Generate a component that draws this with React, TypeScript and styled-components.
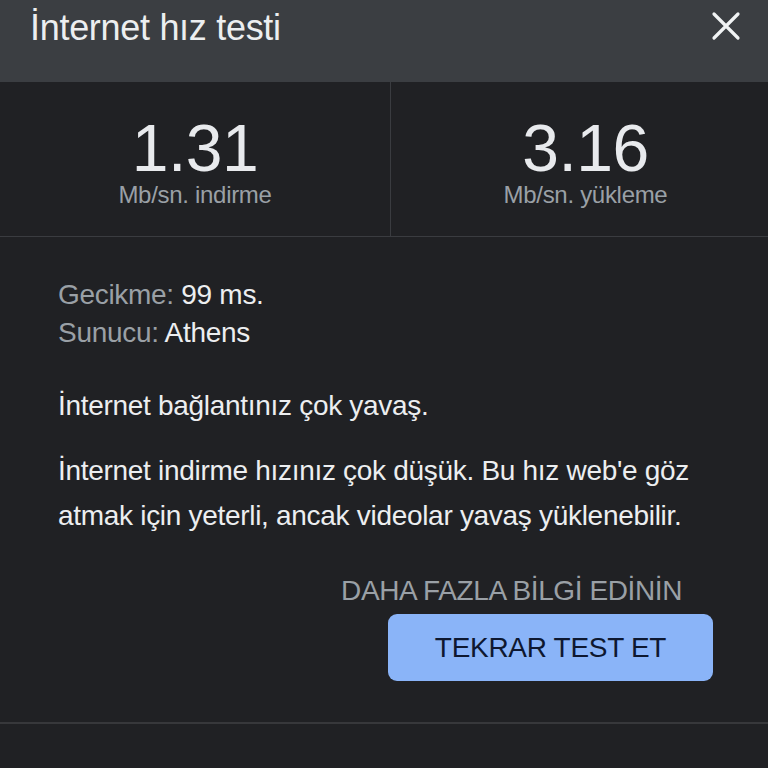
import React from "react";
import styled, { createGlobalStyle } from "styled-components";

const Global = createGlobalStyle`
  html, body { margin: 0; padding: 0; background: #202124; }
  body { font-family: "Liberation Sans", Arial, sans-serif; overflow: hidden; }
`;

const Dialog = styled.div`
  width: 768px;
  height: 768px;
  background: #202124;
  color: #e8eaed;
  overflow: hidden;
`;

const Header = styled.header`
  height: 82px;
  box-sizing: border-box;
  background: #3b3e42;
  display: flex;
  align-items: flex-start;
  justify-content: space-between;
  padding: 10px 26px 0 30px;
`;

const Title = styled.h1`
  margin: 0;
  font-size: 36px;
  line-height: 35px;
  font-weight: 400;
  color: #eceef0;
  letter-spacing: -0.3px;
`;

const Close = styled.button`
  border: 0;
  background: none;
  padding: 0;
  width: 32px;
  height: 32px;
  display: flex;
  align-items: center;
  justify-content: center;
  cursor: pointer;
`;

const Stats = styled.section`
  display: grid;
  grid-template-columns: 390px 390px;
  border-bottom: 1px solid #3a3c40;
`;

const Stat = styled.div<{ $divider?: boolean }>`
  display: flex;
  flex-direction: column;
  align-items: center;
  padding: 36px 0 29px;
  border-left: ${(p) => (p.$divider ? "1px solid #3a3c40" : "0")};
`;

const Value = styled.div`
  font-size: 66px;
  line-height: 60px;
  color: #e8eaed;
  letter-spacing: -0.5px;
`;

const Unit = styled.div`
  font-size: 24px;
  line-height: 24px;
  margin-top: 5px;
  color: #9aa0a6;
  letter-spacing: -0.3px;
`;

const Body = styled.section`
  padding: 39px 55px 41px 58px;
  display: flex;
  flex-direction: column;
  border-bottom: 2px solid #37383b;
`;

const InfoLine = styled.div`
  font-size: 28px;
  line-height: 38px;
  color: #9aa0a6;
  letter-spacing: -0.3px;
`;

const InfoValue = styled.span`
  color: #eceef0;
`;

const Message = styled.p<{ $gap: number; $lh: number }>`
  margin: ${(p) => p.$gap}px 0 0;
  font-size: 28px;
  line-height: ${(p) => p.$lh}px;
  color: #eceef0;
  letter-spacing: -0.3px;
`;

const Actions = styled.div`
  display: flex;
  flex-direction: column;
  align-items: flex-end;
  margin-top: 38px;
`;

const LinkButton = styled.a`
  font-size: 28px;
  line-height: 30px;
  color: #9aa0a6;
  margin-right: 31px;
  letter-spacing: -0.4px;
  text-decoration: none;
`;

const PrimaryButton = styled.button`
  margin-top: 8px;
  width: 325px;
  height: 67px;
  border: 0;
  border-radius: 9px;
  background: #8ab4f8;
  color: #0e1830;
  font-family: "Liberation Sans", Arial, sans-serif;
  font-size: 28px;
  letter-spacing: -0.3px;
  display: flex;
  align-items: center;
  justify-content: center;
  cursor: pointer;
`;

export default function App() {
  return (
    <>
      <Global />
      <Dialog>
        <Header>
          <Title>İnternet hız testi</Title>
          <Close aria-label="Kapat">
            <svg width="30" height="30" viewBox="0 0 30 30">
              <path d="M3 3 L27 27 M27 3 L3 27" stroke="#f1f3f4" strokeWidth="3.2" strokeLinecap="round" />
            </svg>
          </Close>
        </Header>
        <Stats>
          <Stat>
            <Value>1.31</Value>
            <Unit>Mb/sn. indirme</Unit>
          </Stat>
          <Stat $divider>
            <Value>3.16</Value>
            <Unit>Mb/sn. yükleme</Unit>
          </Stat>
        </Stats>
        <Body>
          <InfoLine>
            Gecikme: <InfoValue>99 ms.</InfoValue>
          </InfoLine>
          <InfoLine>
            Sunucu: <InfoValue>Athens</InfoValue>
          </InfoLine>
          <Message $gap={35} $lh={38}>İnternet bağlantınız çok yavaş.</Message>
          <Message $gap={23} $lh={45}>
            İnternet indirme hızınız çok düşük. Bu hız web'e göz
            <br />
            atmak için yeterli, ancak videolar yavaş yüklenebilir.
          </Message>
          <Actions>
            <LinkButton>DAHA FAZLA BİLGİ EDİNİN</LinkButton>
            <PrimaryButton>TEKRAR TEST ET</PrimaryButton>
          </Actions>
        </Body>
      </Dialog>
    </>
  );
}
